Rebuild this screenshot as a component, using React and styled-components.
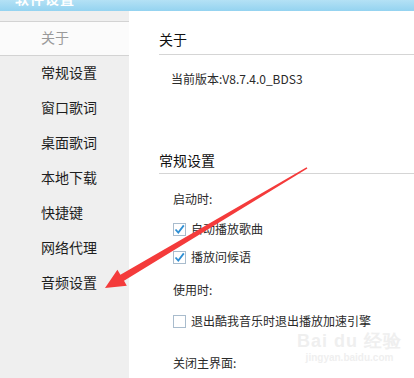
import React from 'react';
import styled, { createGlobalStyle } from 'styled-components';

const GlobalStyle = createGlobalStyle`
  html, body {
    margin: 0;
    padding: 0;
    background: #ffffff;
  }
  body {
    font-family: "Noto Sans CJK SC", "Noto Sans", sans-serif;
  }
`;

const Frame = styled.div`
  position: relative;
  width: 414px;
  height: 378px;
  overflow: hidden;
  display: flex;
  flex-direction: column;
  background: #ffffff;
`;

const TitleBar = styled.div`
  height: 11px;
  flex: none;
  display: flex;
  align-items: flex-end;
  overflow: hidden;
  padding-left: 15px;
  background: linear-gradient(180deg, #b4e1f5 0%, #94d3f0 100%);
`;

const TitleText = styled.span`
  color: #ffffff;
  font-size: 14px;
  font-weight: 700;
  line-height: 14px;
  margin-bottom: 6px;
  letter-spacing: 1px;
`;

const Body = styled.div`
  flex: 1;
  display: flex;
  min-height: 0;
`;

const Sidebar = styled.nav`
  width: 129px;
  flex: none;
  background: #efefef;
  padding-top: 10px;
`;

const NavItem = styled.div`
  box-sizing: border-box;
  height: 35px;
  padding-bottom: 3px;
  display: flex;
  align-items: center;
  padding-left: 41px;
  font-size: 14px;
  color: ${p => (p.$active ? '#9a9a9a' : '#1e1e1e')};
  background: ${p => (p.$active ? '#fbfbfb' : 'transparent')};
  border-top: ${p => (p.$active ? '1px solid #d3d3d3' : 'none')};
  border-bottom: ${p => (p.$active ? '1px solid #d3d3d3' : 'none')};
`;

const Main = styled.main`
  flex: 1;
  background: #ffffff;
  display: flex;
  flex-direction: column;
`;

const Heading = styled.div`
  margin-top: ${p => p.$top}px;
  margin-left: 30px;
  padding-bottom: ${p => p.$pad}px;
  font-size: 14px;
  line-height: 20px;
  color: #111111;
  border-bottom: 1px solid #d5d5d5;
`;

const Line = styled.div`
  margin-top: ${p => p.$top}px;
  padding-left: ${p => p.$indent}px;
  font-size: 12px;
  line-height: 16px;
  color: #2a2a2a;
  white-space: nowrap;
`;

const CheckRow = styled.label`
  margin-top: ${p => p.$top}px;
  padding-left: 44px;
  display: flex;
  align-items: center;
  gap: 5px;
  font-size: 12px;
  line-height: 16px;
  color: #2a2a2a;
  white-space: nowrap;
`;

const Box = styled.span`
  width: 11px;
  height: 11px;
  flex: none;
  border: 1px solid #a9bccd;
  background: #ffffff;
  display: flex;
  align-items: center;
  justify-content: center;
`;

const Overlay = styled.svg`
  position: absolute;
  left: 0;
  top: 0;
  pointer-events: none;
`;

const Watermark = styled.div`
  position: absolute;
  left: 297px;
  top: 332px;
  display: flex;
  flex-direction: column;
  align-items: center;
  color: #efefef;
  font-family: "Liberation Sans", sans-serif;
  pointer-events: none;
`;

const MarkTop = styled.div`
  font-size: 18px;
  font-weight: 700;
  line-height: 19px;
  letter-spacing: 1px;
`;

const MarkBottom = styled.div`
  font-size: 10px;
  font-weight: 700;
  line-height: 12px;
  margin-top: 1px;
`;

const navItems = ['常规设置', '窗口歌词', '桌面歌词', '本地下载', '快捷键', '网络代理', '音频设置'];

const Check = ({ checked, children, top }) => (
  <CheckRow $top={top}>
    <Box>
      {checked && (
        <svg width="11" height="11" viewBox="0 0 11 11">
          <path d="M1.5 5.5 L4.3 8.6 L9.8 1.4" fill="none" stroke="#2e8fd4" strokeWidth="1.8" />
        </svg>
      )}
    </Box>
    <span>{children}</span>
  </CheckRow>
);

export default function App() {
  return (
    <Frame>
      <GlobalStyle />
      <TitleBar>
        <TitleText>软件设置</TitleText>
      </TitleBar>
      <Body>
        <Sidebar>
          <NavItem $active>关于</NavItem>
          {navItems.map(item => (
            <NavItem key={item}>{item}</NavItem>
          ))}
        </Sidebar>
        <Main>
          <Heading $top={18} $pad={5}>关于</Heading>
          <Line $top={16} $indent={42}>当前版本:V8.7.4.0_BDS3</Line>
          <Heading $top={63} $pad={3}>常规设置</Heading>
          <Line $top={17} $indent={44}>启动时:</Line>
          <Check checked top={14}>自动播放歌曲</Check>
          <Check checked top={12}>播放问候语</Check>
          <Line $top={17} $indent={44}>使用时:</Line>
          <Check top={15}>退出酷我音乐时退出播放加速引擎</Check>
          <Line $top={26} $indent={44}>关闭主界面:</Line>
        </Main>
      </Body>
      <Watermark>
        <MarkTop>Bai du 经验</MarkTop>
        <MarkBottom>jingyan.baidu.com</MarkBottom>
      </Watermark>
      <Overlay width="414" height="378" viewBox="0 0 414 378">
        <polygon
          points="307.4,168.5 124,280.8 126.8,285.8 105,288 117.4,269.8 120.4,274.8 306.6,167.3"
          fill="#f43b3b"
        />
      </Overlay>
    </Frame>
  );
}
